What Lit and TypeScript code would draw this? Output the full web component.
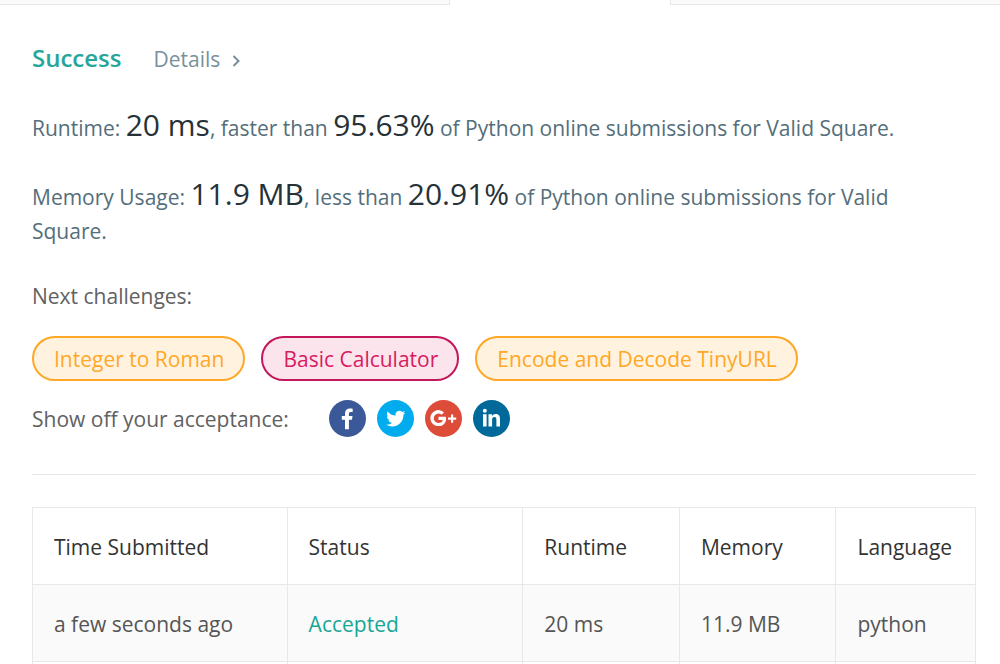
import { LitElement, html, css, svg } from "lit";
import { customElement } from "lit/decorators.js";

interface Challenge {
  title: string;
  level: "medium" | "hard";
}

const challenges: Challenge[] = [
  { title: "Integer to Roman", level: "medium" },
  { title: "Basic Calculator", level: "hard" },
  { title: "Encode and Decode TinyURL", level: "medium" },
];

const networks = [
  {
    name: "Facebook",
    color: "facebook",
    glyph: svg`<path d="M19.900 29.300V19.700h3.100l.5-3.700h-3.600v-2.100c0-1.100.4-1.800 1.900-1.800h1.900V8.800c-.4 0-1.500-.2-2.800-.2-2.800 0-4.900 1.700-4.900 4.800V16h-3.200v3.700H16v9.600z"/>`,
  },
  {
    name: "Twitter",
    color: "twitter",
    glyph: svg`<path transform="translate(9.200 9) scale(.8)" d="M23.950 4.570a10 10 0 0 1-2.820.770 4.960 4.960 0 0 0 2.160-2.720c-.950.550-2 .960-3.130 1.180a4.920 4.920 0 0 0-8.380 4.480C7.690 8.090 4.070 6.130 1.640 3.160a4.820 4.820 0 0 0-.670 2.480c0 1.710.870 3.210 2.190 4.100a4.900 4.900 0 0 1-2.230-.620v.060a4.920 4.920 0 0 0 3.950 4.830 5 5 0 0 1-2.210.080 4.940 4.940 0 0 0 4.600 3.420A9.870 9.870 0 0 1 0 19.540a14 14 0 0 0 7.550 2.210c9.050 0 14-7.500 14-13.980 0-.210 0-.420-.020-.630a9.940 9.940 0 0 0 2.460-2.550z"/>`,
  },
  {
    name: "Google Plus",
    color: "google",
    glyph: svg`<path d="M13.500 16.700v3.200h4.300c-.400 1.900-2 3-4.300 3a4.700 4.700 0 1 1 3.100-8.200l2.400-2.300a8 8 0 1 0-5.500 13.700c4.600 0 7.600-3.100 7.600-7.700 0-.600-.100-1.200-.200-1.700zM26 14.600v3h-3v2.200h3v3h2.200v-3h3v-2.200h-3v-3z"/>`,
  },
  {
    name: "LinkedIn",
    color: "linkedin",
    glyph: svg`<circle cx="11.800" cy="10.800" r="2"/><path d="M10 14.200h3.600v12.300H10zM15.500 14.200H19v1.700c.6-1.100 1.900-2 3.700-2 3.600 0 4.300 2.300 4.300 5.500v7.100h-3.600v-6.400c0-1.500-.1-3.100-2-3.100s-2.300 1.400-2.300 3v6.500h-3.600z"/>`,
  },
];

@customElement("app-root")
export class AppRoot extends LitElement {
  static styles = css`
    :host {
      display: block;
      height: 100vh;
      overflow: hidden;
      background: #fff;
      color: #616161;
      font-family: "Open Sans", "Noto Sans", sans-serif;
      font-size: 21px;
      line-height: 34px;
    }
    .tabs {
      display: grid;
      grid-template-columns: 45% 22% 1fr;
      height: 5px;
    }
    .tab {
      box-sizing: border-box;
      background: #fafafa;
      border: 1px solid #e8e8e8;
      border-width: 0 1px 1px;
    }
    .tab:first-child {
      border-left: 0;
    }
    .tab:last-child {
      border-right: 0;
    }
    .tab.active {
      background: #fff;
      border: 0;
    }
    .result {
      padding: 36px 24px 0 32px;
    }
    .heading {
      display: flex;
      align-items: baseline;
      gap: 32px;
    }
    .success {
      margin: 0;
      color: #26a69a;
      font-size: 24px;
      font-weight: 600;
      line-height: 34px;
    }
    .details {
      display: flex;
      align-items: center;
      gap: 12px;
      color: #78909c;
      text-decoration: none;
    }
    .chevron {
      width: 8px;
      height: 12px;
      padding-top: 3px;
      fill: none;
      stroke: currentColor;
      stroke-width: 2;
    }
    .stat {
      margin: 32px 0 0;
      padding-right: 32px;
      color: #546e7a;
    }
    .figure {
      color: #263238;
      font-size: 30px;
    }
    .label {
      margin: 31px 0 0;
    }
    .pills {
      display: flex;
      flex-wrap: wrap;
      gap: 16px;
      margin-top: 23px;
    }
    .pill {
      padding: 4px 19px 3px 20px;
      border: 2px solid;
      border-radius: 24px;
      text-decoration: none;
    }
    .medium {
      color: #ffa726;
      background: #fff3e0;
    }
    .hard {
      color: #d81b60;
      background: #fce4ec;
      border-color: #c2185b;
    }
    .share {
      display: flex;
      align-items: center;
      gap: 40px;
      margin-top: 19px;
    }
    .networks {
      display: flex;
      gap: 11px;
    }
    .network {
      display: block;
      width: 37px;
      height: 37px;
      border-radius: 50%;
    }
    .network svg {
      display: block;
      fill: #fff;
    }
    .facebook {
      background: #3b5998;
    }
    .twitter {
      background: #00aced;
    }
    .google {
      background: #dd4b39;
    }
    .linkedin {
      background: #006999;
    }
    .rule {
      margin: 37px 0 32px;
      border: 0;
      border-top: 1px solid #e8e8e8;
    }
    .history {
      width: 100%;
      border-collapse: collapse;
      table-layout: fixed;
      white-space: nowrap;
    }
    .time {
      width: 27%;
    }
    .status {
      width: 25%;
    }
    .measure {
      width: 16.6%;
    }
    th,
    td {
      box-sizing: border-box;
      height: 77px;
      padding: 2px 21px 0;
      border: 1px solid #e8e8e8;
      font-weight: 400;
      text-align: left;
    }
    th {
      color: #333;
    }
    td {
      color: #555;
    }
    tbody tr:nth-child(odd) {
      background: #fafafa;
    }
    .accepted {
      color: #17a697;
      text-decoration: none;
    }
  `;

  render() {
    return html`
      <div class="tabs">
        <div class="tab"></div>
        <div class="tab active"></div>
        <div class="tab"></div>
      </div>
      <main class="result">
        <div class="heading">
          <h1 class="success">Success</h1>
          <a class="details" href="#details">
            Details
            <svg class="chevron" viewBox="0 0 8 12" aria-hidden="true">
              <path d="M1.500 1 6.500 6l-5 5" />
            </svg>
          </a>
        </div>
        <p class="stat">
          Runtime: <span class="figure">20 ms</span>, faster than
          <span class="figure">95.63%</span> of Python online submissions for
          Valid Square.
        </p>
        <p class="stat">
          Memory Usage: <span class="figure">11.9 MB</span>, less than
          <span class="figure">20.91%</span> of Python online submissions for
          Valid Square.
        </p>
        <p class="label">Next challenges:</p>
        <nav class="pills">
          ${challenges.map(
            (c) => html`<a class="pill ${c.level}" href="#problem">${c.title}</a>`
          )}
        </nav>
        <div class="share">
          <span>Show off your acceptance:</span>
          <div class="networks">
            ${networks.map(
              (n) => html`<a
                class="network ${n.color}"
                href="#share"
                aria-label=${n.name}
                ><svg viewBox="0 0 37 37" aria-hidden="true">${n.glyph}</svg></a
              >`
            )}
          </div>
        </div>
        <hr class="rule" />
        <table class="history">
          <thead>
            <tr>
              <th class="time">Time Submitted</th>
              <th class="status">Status</th>
              <th class="measure">Runtime</th>
              <th class="measure">Memory</th>
              <th>Language</th>
            </tr>
          </thead>
          <tbody>
            <tr>
              <td>a few seconds ago</td>
              <td><a class="accepted" href="#submission">Accepted</a></td>
              <td>20 ms</td>
              <td>11.9 MB</td>
              <td>python</td>
            </tr>
            <tr>
              <td></td>
              <td></td>
              <td></td>
              <td></td>
              <td></td>
            </tr>
          </tbody>
        </table>
      </main>
    `;
  }
}
